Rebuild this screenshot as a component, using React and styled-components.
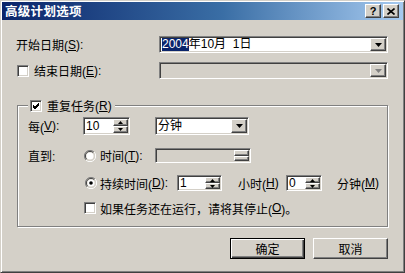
import styled, { createGlobalStyle } from "styled-components";

const Global = createGlobalStyle`
  html, body {
    margin: 0;
    padding: 0;
    background: #d4d0c8;
  }
  body {
    font: 12px "Liberation Sans", "Noto Sans CJK SC", sans-serif;
    color: #000;
  }
`;

const raised = `
  box-sizing: border-box;
  background: #d4d0c8;
  border: 1px solid;
  border-color: #fff #404040 #404040 #fff;
  box-shadow: inset -1px -1px #808080, inset 1px 1px #d4d0c8;
`;

const sunken = `
  box-sizing: border-box;
  border: 1px solid;
  border-color: #808080 #fff #fff #808080;
  box-shadow: inset 1px 1px #404040, inset -1px -1px #d4d0c8;
`;

const Window = styled.div`
  width: 405px;
  height: 273px;
  box-sizing: border-box;
  background: #d4d0c8;
  border: 1px solid;
  border-color: #d4d0c8 #404040 #404040 #d4d0c8;
  box-shadow: inset 1px 1px #fff, inset -1px -1px #808080;
  padding: 1px;
  display: flex;
  flex-direction: column;
`;

const TitleBar = styled.div`
  height: 18px;
  display: flex;
  align-items: center;
  padding: 0 4px 0 3px;
  background: linear-gradient(90deg, #0a246a 0%, #3a6ea5 55%, #a6caf0 100%);
`;

const Title = styled.div`
  flex: 1;
  color: #fff;
  font-weight: bold;
  font-size: 12.5px;
  line-height: 14px;
  font-family: "Noto Sans CJK SC", sans-serif;
  letter-spacing: 0.3px;
`;

const CaptionButton = styled.div`
  ${raised}
  width: 16px;
  height: 14px;
  display: flex;
  align-items: center;
  justify-content: center;
  font: bold 11px "Liberation Sans", sans-serif;
  margin-left: ${(p) => (p.$gap ? "2px" : "0")};
`;

const Body = styled.div`
  flex: 1;
  display: flex;
  flex-direction: column;
  padding: 0 15px 0 14px;
`;

const Row = styled.div`
  display: flex;
  align-items: center;
  height: ${(p) => p.$h}px;
  margin-top: ${(p) => p.$top}px;
`;

const Label = styled.span`
  display: flex;
  align-items: center;
  width: ${(p) => (p.$w ? `${p.$w}px` : "auto")};
  flex: none;
  white-space: nowrap;
  margin-left: ${(p) => p.$ml || 0}px;
`;

const Field = styled.div`
  ${sunken}
  width: ${(p) => p.$w}px;
  height: ${(p) => p.$h}px;
  background: ${(p) => (p.$disabled ? "#d4d0c8" : "#fff")};
  display: flex;
  align-items: stretch;
  padding: 1px;
  flex: none;
`;

const FieldText = styled.span`
  flex: 1;
  display: flex;
  align-items: center;
  padding-left: 1px;
  line-height: 13px;
  white-space: nowrap;
  overflow: hidden;
`;

const Selected = styled.span`
  background: #0a246a;
  color: #fff;
`;

const DropButton = styled.div`
  ${raised}
  width: 16px;
  display: flex;
  align-items: center;
  justify-content: center;
`;

const Spin = styled.div`
  width: 15px;
  display: flex;
  flex-direction: column;
`;

const SpinButton = styled.div`
  ${raised}
  flex: 1;
  display: flex;
  align-items: center;
  justify-content: center;
`;

const Box = styled.span`
  ${sunken}
  width: 12px;
  height: 12px;
  background: #fff;
  display: flex;
  align-items: center;
  justify-content: center;
  flex: none;
  margin-left: ${(p) => p.$ml || 0}px;
`;

const Group = styled.fieldset`
  box-sizing: border-box;
  width: 371px;
  margin: 20px 0 0 1px;
  padding: 0 10px 12px 10px;
  border: 1px solid #808080;
  box-shadow: inset 1px 1px #fff, 1px 1px #fff;
  min-width: 0;
`;

const Legend = styled.legend`
  display: flex;
  align-items: center;
  height: 13px;
  padding: 0 3px 0 2px;
  background: #d4d0c8;
`;

const Buttons = styled.div`
  display: flex;
  justify-content: flex-end;
  gap: 8px;
  margin-top: 11px;
`;

const Button = styled.div`
  ${raised}
  width: 75px;
  height: 21px;
  display: flex;
  align-items: center;
  justify-content: center;
  font-family: "Noto Sans CJK SC", sans-serif;
  ${(p) =>
    p.$default &&
    `
    border-color: #000;
    box-shadow: inset 1px 1px #fff, inset -1px -1px #404040, inset -2px -2px #808080;
  `}
`;

const Down = ({ color = "#000" }) => (
  <svg width="7" height="4" viewBox="0 0 7 4">
    <polygon points="0,0 7,0 3.5,4" fill={color} />
  </svg>
);

const SpinArrow = ({ up }) => (
  <svg width="5" height="3" viewBox="0 0 5 3">
    <polygon points={up ? "0,3 5,3 2.5,0" : "0,0 5,0 2.5,3"} fill="#000" />
  </svg>
);

const Check = () => (
  <svg width="8" height="8" viewBox="0 0 8 8">
    <path d="M1 3 L3 5 L7 1 M1 4 L3 6 L7 2 M1 5 L3 7 L7 3" stroke="#000" strokeWidth="1" fill="none" />
  </svg>
);

const Radio = ({ checked, ml }) => (
  <svg width="12" height="12" viewBox="0 0 12 12" style={{ marginLeft: ml, flex: "none" }}>
    <circle cx="6" cy="6" r="5.5" fill="#d4d0c8" />
    <path d="M10 2 A5.5 5.5 0 0 0 2 10" stroke="#808080" fill="none" />
    <path d="M2 10 A5.5 5.5 0 0 0 10 2" stroke="#fff" fill="none" />
    <path d="M9.3 2.7 A4.5 4.5 0 0 0 2.7 9.3" stroke="#404040" fill="none" />
    <path d="M2.7 9.3 A4.5 4.5 0 0 0 9.3 2.7" stroke="#d4d0c8" fill="none" />
    <circle cx="6" cy="6" r="3.6" fill="#fff" />
    {checked && <circle cx="6" cy="6" r="1.8" fill="#000" />}
  </svg>
);

const SpinBox = ({ w, h, value, disabled }) => (
  <Field $w={w} $h={h} $disabled={disabled}>
    <FieldText>{value}</FieldText>
    <Spin>
      <SpinButton>{!disabled && <SpinArrow up />}</SpinButton>
      <SpinButton>{!disabled && <SpinArrow />}</SpinButton>
    </Spin>
  </Field>
);

const Combo = ({ w, h, children, disabled }) => (
  <Field $w={w} $h={h} $disabled={disabled}>
    <FieldText>{children}</FieldText>
    <DropButton>
      <Down color={disabled ? "#808080" : "#000"} />
    </DropButton>
  </Field>
);

const App = () => (
  <>
    <Global />
    <Window>
      <TitleBar>
        <Title>高级计划选项</Title>
        <CaptionButton>?</CaptionButton>
        <CaptionButton $gap>
          <svg width="8" height="7" viewBox="0 0 8 7">
            <path d="M0.5 0.5 L7.5 6.5 M7.5 0.5 L0.5 6.5" stroke="#000" strokeWidth="1.6" />
          </svg>
        </CaptionButton>
      </TitleBar>
      <Body>
        <Row $h={17} $top={16}>
          <Label $w={143}>
            开始日期(<u>S</u>):
          </Label>
          <Combo w={229} h={17}>
            <Selected>2004</Selected>年10月&nbsp;&nbsp;1日
          </Combo>
        </Row>
        <Row $h={17} $top={9}>
          <Label $w={143}>
            <Box $ml={1} />
            <Label $ml={5}>
              结束日期(<u>E</u>):
            </Label>
          </Label>
          <Combo w={229} h={17} disabled />
        </Row>
        <Group>
          <Legend>
            <Box>
              <Check />
            </Box>
            <Label $ml={5}>
              重复任务(<u>R</u>)
            </Label>
          </Legend>
          <Row $h={18} $top={5}>
            <Label $w={55}>
              每(<u>V</u>):
            </Label>
            <SpinBox w={47} h={18} value="10" />
            <Label $w={25} />
            <Combo w={94} h={18}>
              分钟
            </Combo>
          </Row>
          <Row $h={15} $top={13}>
            <Label $w={56}>直到:</Label>
            <Radio />
            <Label $w={55} $ml={4}>
              时间(<u>T</u>):
            </Label>
            <SpinBox w={96} h={15} disabled />
          </Row>
          <Row $h={16} $top={12}>
            <Radio checked ml={57} />
            <Label $w={77} $ml={3}>
              持续时间(<u>D</u>):
            </Label>
            <SpinBox w={45} h={16} value="1" />
            <Label $w={48} $ml={16}>
              小时(<u>H</u>)
            </Label>
            <SpinBox w={36} h={16} value="0" />
            <Label $ml={15}>
              分钟(<u>M</u>)
            </Label>
          </Row>
          <Row $h={12} $top={11}>
            <Box $ml={56} />
            <Label $ml={4}>
              如果任务还在运行，请将其停止(<u>O</u>)。
            </Label>
          </Row>
        </Group>
        <Buttons>
          <Button $default>确定</Button>
          <Button>取消</Button>
        </Buttons>
      </Body>
    </Window>
  </>
);

export default App;
